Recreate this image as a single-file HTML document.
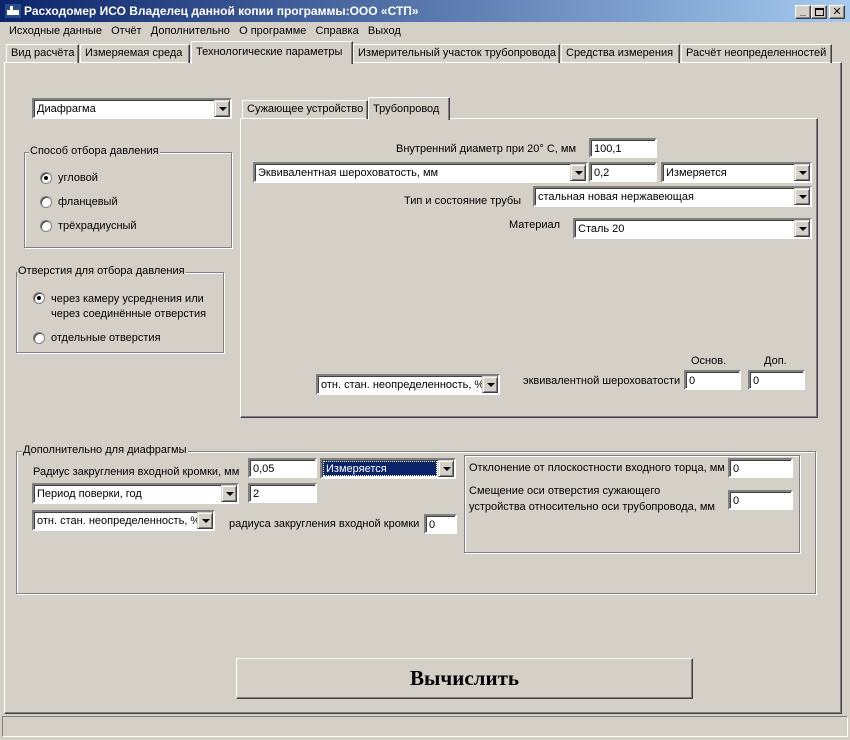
<!DOCTYPE html>
<html><head><meta charset="utf-8"><style>
*{box-sizing:border-box;margin:0;padding:0}
body{width:850px;height:740px;background:#d4d0c8;font-family:"Liberation Sans","DejaVu Sans",sans-serif;font-size:11px;color:#000;position:relative;overflow:hidden}
.a{position:absolute;white-space:nowrap}
.in{position:absolute;white-space:nowrap;background:#fff;border:2px solid;border-color:#808080 #fff #fff #808080;box-shadow:inset 1px 1px 0 #404040;padding:2px 3px 0;line-height:14px;height:20px}
.cb{position:absolute;white-space:nowrap;overflow:hidden;background:#fff;border:2px solid;border-color:#808080 #fff #fff #808080;box-shadow:inset 1px 1px 0 #404040;padding:3px 3px 0;line-height:13px;height:21px}
.cb .b{position:absolute;right:0;top:0;width:16px;height:17px;background:#d4d0c8;border:1px solid;border-color:#d4d0c8 #404040 #404040 #d4d0c8;box-shadow:inset 1px 1px 0 #fff,inset -1px -1px 0 #808080}
.cb .b:after{content:"";position:absolute;left:4px;top:6px;border-left:4px solid transparent;border-right:4px solid transparent;border-top:4px solid #000}
.grp{position:absolute;border:1px solid #808080;box-shadow:1px 1px 0 #fff,inset 1px 1px 0 #fff}
.grp .t{position:absolute;top:-8px;left:4px;background:#d4d0c8;padding:0 1px;white-space:nowrap}
.rd{position:absolute;width:12px;height:12px;border-radius:50%;background:#fff;border:1px solid #808080;box-shadow:inset 1px 1px 0 #404040}
.rd.on:after{content:"";position:absolute;left:3px;top:3px;width:4px;height:4px;border-radius:50%;background:#000}
.tab{position:absolute;white-space:nowrap;border:1px solid;border-color:#fff #404040 transparent #fff;border-bottom:none;padding:0 4px;height:19px;line-height:17px;box-shadow:inset -1px 0 0 #808080}
.raised{border:1px solid;border-color:#fff #404040 #404040 #fff;box-shadow:inset -1px -1px 0 #808080}
</style></head><body>
<div class="a" style="left:0;top:0;width:850px;height:22px;background:linear-gradient(90deg,#0a246a,#a6caf0)"></div>
<div class="a" style="left:5px;top:4px;width:16px;height:14px;background:#2a4a8a"><div style="position:absolute;left:2px;top:6px;width:12px;height:5px;background:#fff"></div><div style="position:absolute;left:5px;top:2px;width:3px;height:5px;background:#fff"></div></div>
<div class="a" style="left:24px;top:4px;color:#fff;font-weight:bold;font-size:12px">Расходомер ИСО Владелец данной копии программы:ООО «СТП»</div>
<div class="a raised" style="left:795px;top:5px;width:16px;height:14px;background:#d4d0c8;font-size:10px;text-align:center;line-height:12px;font-weight:bold">_</div>
<div class="a raised" style="left:811px;top:5px;width:16px;height:14px;background:#d4d0c8"><div style="position:absolute;left:3px;top:2px;width:9px;height:8px;border:1px solid #000;border-top-width:2px"></div></div>
<div class="a raised" style="left:829px;top:5px;width:16px;height:14px;background:#d4d0c8;font-size:11px;text-align:center;line-height:12px;font-weight:bold">✕</div>
<div class="a" style="left:9px;top:25px">Исходные данные&nbsp;&nbsp; Отчёт&nbsp;&nbsp; Дополнительно&nbsp;&nbsp; О программе&nbsp;&nbsp; Справка&nbsp;&nbsp; Выход</div>

<div class="a raised" style="left:4px;top:62px;width:838px;height:652px"></div>
<div class="tab" style="left:6px;top:44px;width:73px">Вид расчёта</div>
<div class="tab" style="left:80px;top:44px;width:110px">Измеряемая среда</div>
<div class="tab" style="left:191px;top:41px;width:162px;height:23px;background:#d4d0c8;line-height:20px">Технологические параметры</div>
<div class="tab" style="left:353px;top:44px;width:207px">Измерительный участок трубопровода</div>
<div class="tab" style="left:561px;top:44px;width:119px">Средства измерения</div>
<div class="tab" style="left:681px;top:44px;width:151px">Расчёт неопределенностей</div>

<div class="cb" style="left:32px;top:98px;width:200px">Диафрагма<div class="b"></div></div>

<div class="grp" style="left:24px;top:152px;width:208px;height:96px"><span class="t">Способ отбора давления</span></div>
<div class="rd on" style="left:40px;top:172px"></div><div class="a" style="left:58px;top:172px">угловой</div>
<div class="rd" style="left:40px;top:196px"></div><div class="a" style="left:58px;top:196px">фланцевый</div>
<div class="rd" style="left:40px;top:220px"></div><div class="a" style="left:58px;top:220px">трёхрадиусный</div>

<div class="grp" style="left:16px;top:272px;width:208px;height:81px"><span class="t" style="left:0">Отверстия для отбора давления</span></div>
<div class="rd on" style="left:33px;top:292px"></div><div class="a" style="left:51px;top:292px;line-height:15px">через камеру усреднения или<br>через соединённые отверстия</div>
<div class="rd" style="left:33px;top:332px"></div><div class="a" style="left:51px;top:332px">отдельные отверстия</div>

<div class="a raised" style="left:240px;top:118px;width:578px;height:300px"></div>
<div class="tab" style="left:242px;top:100px;width:126px">Сужающее устройство</div>
<div class="tab" style="left:368px;top:97px;width:82px;height:23px;background:#d4d0c8;line-height:22px">Трубопровод</div>

<div class="a" style="left:396px;top:143px">Внутренний диаметр при 20° С, мм</div>
<div class="in" style="left:589px;top:138px;width:68px">100,1</div>
<div class="cb" style="left:253px;top:162px;width:335px">Эквивалентная шероховатость, мм<div class="b"></div></div>
<div class="in" style="left:589px;top:162px;width:68px">0,2</div>
<div class="cb" style="left:661px;top:162px;width:151px">Измеряется<div class="b"></div></div>
<div class="a" style="left:404px;top:195px">Тип и состояние трубы</div>
<div class="cb" style="left:533px;top:186px;width:279px">стальная новая нержавеющая<div class="b"></div></div>
<div class="a" style="left:509px;top:219px">Материал</div>
<div class="cb" style="left:573px;top:218px;width:239px">Сталь 20<div class="b"></div></div>
<div class="a" style="left:691px;top:355px">Основ.</div>
<div class="a" style="left:764px;top:355px">Доп.</div>
<div class="cb" style="left:316px;top:374px;width:184px">отн. стан. неопределенность, %<div class="b"></div></div>
<div class="a" style="left:523px;top:375px">эквивалентной шероховатости</div>
<div class="in" style="left:684px;top:370px;width:57px">0</div>
<div class="in" style="left:748px;top:370px;width:57px">0</div>

<div class="grp" style="left:16px;top:451px;width:800px;height:143px"><span class="t" style="left:5px">Дополнительно для диафрагмы</span></div>
<div class="a" style="left:33px;top:466px">Радиус закругления входной кромки, мм</div>
<div class="in" style="left:248px;top:458px;width:69px">0,05</div>
<div class="cb" style="left:320px;top:458px;width:136px;padding:0"><div style="position:absolute;left:1px;top:1px;right:17px;bottom:1px;background:#0a246a;color:#fff;padding:0 2px;line-height:14px;border:1px dotted #fff">Измеряется</div><div class="b"></div></div>
<div class="cb" style="left:32px;top:483px;width:207px">Период поверки, год<div class="b"></div></div>
<div class="in" style="left:248px;top:483px;width:69px">2</div>
<div class="cb" style="left:32px;top:510px;width:183px">отн. стан. неопределенность, %<div class="b"></div></div>
<div class="a" style="left:229px;top:518px">радиуса закругления входной кромки</div>
<div class="in" style="left:424px;top:514px;width:33px">0</div>

<div class="grp" style="left:464px;top:455px;width:336px;height:98px"></div>
<div class="a" style="left:469px;top:462px">Отклонение от плоскостности входного торца, мм</div>
<div class="in" style="left:728px;top:458px;width:65px">0</div>
<div class="a" style="left:469px;top:483px;line-height:16px">Смещение оси отверстия сужающего<br>устройства относительно оси трубопровода, мм</div>
<div class="in" style="left:728px;top:490px;width:65px">0</div>

<div class="a raised" style="left:236px;top:658px;width:457px;height:41px;background:#d4d0c8;text-align:center;line-height:38px;font-family:'Liberation Serif',serif;font-weight:bold;font-size:21px">Вычислить</div>

<div class="a" style="left:2px;top:716px;width:846px;height:21px;border:1px solid;border-color:#808080 #fff #fff #808080"></div>
</body></html>
